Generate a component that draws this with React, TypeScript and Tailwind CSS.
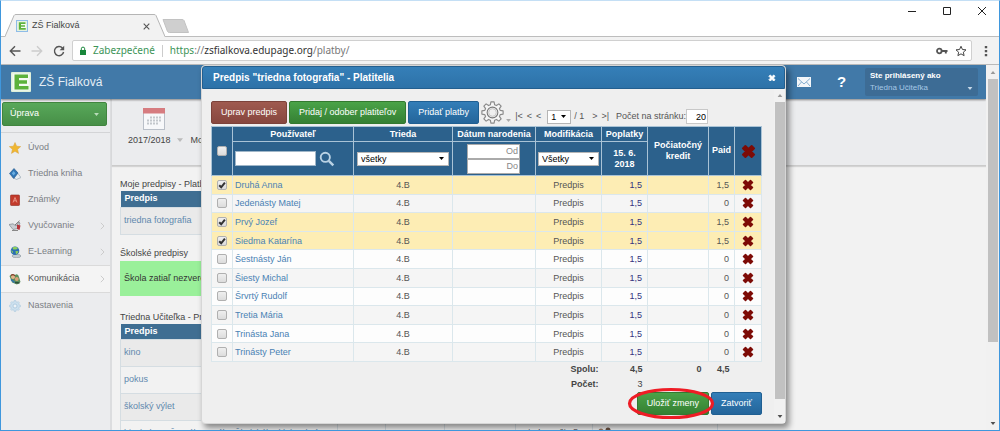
import { useState } from 'react';
import type { ReactNode } from 'react';

type Payer = { name: string; paid: string; selected: boolean };

const payers: Payer[] = [
  { name: 'Druhá Anna', paid: '1,5', selected: true },
  { name: 'Jedenásty Matej', paid: '0', selected: false },
  { name: 'Prvý Jozef', paid: '1,5', selected: true },
  { name: 'Siedma Katarína', paid: '1,5', selected: true },
  { name: 'Šestnásty Ján', paid: '0', selected: false },
  { name: 'Šiesty Michal', paid: '0', selected: false },
  { name: 'Šrvrtý Rudolf', paid: '0', selected: false },
  { name: 'Tretia Mária', paid: '0', selected: false },
  { name: 'Trinásta Jana', paid: '0', selected: false },
  { name: 'Trinásty Peter', paid: '0', selected: false },
];

/* Outline of a cog with eight teeth, centred on (12, 12). */
function cogPath(outer: number, inner: number) {
  const points: string[] = [];
  for (let i = 0; i < 8; i++) {
    const a = (i * Math.PI) / 4;
    const corners: [number, number][] = [
      [inner, -0.27],
      [outer, -0.15],
      [outer, 0.15],
      [inner, 0.27],
    ];
    corners.forEach(([r, d]) => {
      points.push(`${(12 + r * Math.sin(a + d)).toFixed(2)} ${(12 - r * Math.cos(a + d)).toFixed(2)}`);
    });
  }
  return `M${points.join('L')}Z`;
}

function Caret({ className }: { className: string }) {
  return (
    <svg viewBox="0 0 8 5" className={className} aria-hidden="true">
      <path d="M0 0H8L4 5Z" fill="currentColor" />
    </svg>
  );
}

function Cross({ className }: { className: string }) {
  return (
    <svg viewBox="0 0 24 24" className={className} aria-hidden="true">
      <path
        d="M7 3L12 8L17 3L21 7L16 12L21 17L17 21L12 16L7 21L3 17L8 12L3 7Z"
        fill="currentColor"
        stroke="currentColor"
        strokeWidth="3"
        strokeLinejoin="round"
      />
    </svg>
  );
}

function Check({ label, checked, onChange }: { label: string; checked: boolean; onChange: () => void }) {
  return (
    <label className="mx-auto grid size-[10px] place-items-center">
      <input
        type="checkbox"
        aria-label={label}
        checked={checked}
        onChange={onChange}
        className="col-start-1 row-start-1 size-[10px] appearance-none rounded-[2px] border border-[#b0b0b0] bg-linear-to-b from-[#efefef] to-[#dcdcdc]"
      />
      {checked && (
        <svg viewBox="0 0 10 10" className="pointer-events-none col-start-1 row-start-1 size-[10px]" aria-hidden="true">
          <path d="M2.2 5.2L4.2 7.3L7.9 2.6" fill="none" stroke="#333" strokeWidth="2" />
        </svg>
      )}
    </label>
  );
}

function Picker({ label, value, className }: { label: string; value: string; className: string }) {
  return (
    <label className={`grid h-[14px] items-center bg-white text-black ${className}`}>
      <select
        aria-label={label}
        className="col-start-1 row-start-1 h-full w-full appearance-none border border-[#b5b5b5] pl-[3px] text-[9px] leading-3 font-normal"
      >
        <option>{value}</option>
      </select>
      <Caret className="pointer-events-none col-start-1 row-start-1 mr-[5px] h-[5px] w-[5px] justify-self-end" />
    </label>
  );
}

function ActionButton({ tone, children }: { tone: string; children: ReactNode }) {
  return (
    <button type="button" className={`h-[23px] rounded-[2px] border bg-linear-to-b px-[9px] text-[9px] whitespace-nowrap text-white ${tone}`}>
      {children}
    </button>
  );
}

const brown = 'border-[#7c423a] from-[#9f5a4f] to-[#87473f]';
const green = 'border-[#33792f] from-[#4aa348] to-[#358033]';
const blue = 'border-[#1f5f92] from-[#337eb8] to-[#24659a]';

function Logo({ className }: { className: string }) {
  return (
    <svg viewBox="0 0 20 20" className={className} aria-hidden="true">
      <rect width="20" height="20" rx="1" fill="#dff0da" />
      <path d="M1.5 1.5H18.5V18.5H1.5Z" fill="#f4faf2" />
      <path d="M3.5 2.5H17V6H8V8.3H16V11.7H8V14H17.5V17.5H3.5Z" fill="#5cb23c" />
    </svg>
  );
}

function BrowserChrome() {
  return (
    <>
      <div className="flex h-9 shrink-0 items-end border-b border-[#bdbdbd] bg-white pl-1">
        <div className="-mb-px flex h-[23px]">
          <svg viewBox="0 0 11 23" className="h-[23px] w-[11px]" aria-hidden="true">
            <path d="M0 23L9 1.5Q9.500 .5 11 .5V23Z" fill="#f2f2f2" />
            <path d="M0 22.500L9 1.500Q9.500 .5 11 .5" fill="none" stroke="#b5b5b5" />
          </svg>
          <div className="flex w-[138px] items-center gap-1 border-t border-[#b5b5b5] bg-[#f2f2f2]">
            <Logo className="size-3 border border-[#8fbce8]" />
            <span className="flex-1 text-[9px] text-[#444]">ZŠ Fialková</span>
            <button type="button" aria-label="Zavrieť kartu" className="mr-1">
              <svg viewBox="0 0 7 7" className="size-[7px]">
                <path d="M.7 .7L6.300 6.300M6.300 .7L.7 6.300" stroke="#555" strokeWidth="1.100" />
              </svg>
            </button>
          </div>
          <svg viewBox="0 0 11 23" className="h-[23px] w-[11px]" aria-hidden="true">
            <path d="M0 .5Q1.500 .5 2 1.500L11 23H0Z" fill="#f2f2f2" />
            <path d="M0 .5Q1.500 .5 2 1.500L11 22.500" fill="none" stroke="#b5b5b5" />
          </svg>
        </div>
        <svg viewBox="0 0 27 14" className="mb-[3px] -ml-[3px] h-[14px] w-[27px]" aria-hidden="true">
          <path d="M1 .5H20Q21.500 .5 22 1.500L26.500 13.500H7.500Q6 13.500 5.500 12.500Z" fill="#cfcfcf" stroke="#c2c2c2" />
        </svg>
        <div className="mr-[13px] ml-auto flex gap-[27px] self-start pt-[6px]">
          <button type="button" aria-label="Minimalizovať">
            <svg viewBox="0 0 8 8" className="size-2">
              <path d="M0 4.500H8" stroke="#222" />
            </svg>
          </button>
          <button type="button" aria-label="Maximalizovať">
            <svg viewBox="0 0 8 8" className="size-2">
              <path d="M.5 .5H7.500V7.500H.5Z" fill="none" stroke="#222" />
            </svg>
          </button>
          <button type="button" aria-label="Zavrieť">
            <svg viewBox="0 0 8 8" className="size-2">
              <path d="M0 0L8 8M8 0L0 8" stroke="#222" />
            </svg>
          </button>
        </div>
      </div>
      <div className="flex h-7 shrink-0 items-center border-b border-[#b9b9b9] bg-[#f2f2f2] pr-[11px] pl-2">
        <button type="button" aria-label="Späť">
          <svg viewBox="0 0 12 12" className="size-3">
            <path d="M11.500 6H1.500M6 1.300L1.300 6L6 10.700" fill="none" stroke="#555" strokeWidth="1.400" />
          </svg>
        </button>
        <button type="button" aria-label="Dopredu" className="ml-[10px]">
          <svg viewBox="0 0 12 12" className="size-3">
            <path d="M.5 6H10.500M6 1.300L10.700 6L6 10.700" fill="none" stroke="#ccc" strokeWidth="1.400" />
          </svg>
        </button>
        <button type="button" aria-label="Obnoviť" className="ml-[10px]">
          <svg viewBox="0 0 12 12" className="size-3">
            <path d="M9.500 3A4.600 4.600 0 1 0 10.600 7" fill="none" stroke="#555" strokeWidth="1.400" />
            <path d="M11.200 .7V5.300H6.600Z" fill="#555" />
          </svg>
        </button>
        <div className="ml-[7px] flex h-[21px] flex-1 items-center rounded-[2px] border border-[#d0d0d0] bg-white pr-1 pl-[6px] font-['Noto_Sans',sans-serif] text-[10px]">
          <svg viewBox="0 0 8 10" className="h-[10px] w-2" aria-hidden="true">
            <path d="M1 4H7V9H1Z" fill="#18873b" />
            <path d="M2.300 4V2.800A1.700 1.700 0 0 1 5.700 2.800V4" fill="none" stroke="#18873b" />
          </svg>
          <span className="ml-[6px] text-[#3c9457]">Zabezpečené</span>
          <span className="mx-[7px] h-3 border-l border-[#ccc]" />
          <span className="flex-1 text-[#333]">
            <span className="text-[#3c9457]">https</span>
            <span className="text-[#777]">://</span>zsfialkova.edupage.org<span className="text-[#777]">/platby/</span>
          </span>
          <svg viewBox="0 0 12 8" className="h-2 w-3" aria-hidden="true">
            <circle cx="3.300" cy="4" r="2.300" fill="none" stroke="#555" strokeWidth="1.800" />
            <path d="M5.500 4H11.500M9.800 4V6.500" fill="none" stroke="#555" strokeWidth="1.900" />
          </svg>
          <svg viewBox="0 0 24 24" className="ml-[7px] size-3" aria-hidden="true">
            <path
              d="M12 2.500L14.900 9L22 9.700L16.700 14.400L18.200 21.300L12 17.700L5.800 21.300L7.300 14.400L2 9.700L9.100 9Z"
              fill="none"
              stroke="#444"
              strokeWidth="2"
            />
          </svg>
        </div>
        <button type="button" aria-label="Ponuka" className="ml-3">
          <svg viewBox="0 0 4 12" className="h-3 w-1">
            <path d="M.8 1H3.200V3.200H.8ZM.8 5H3.200V7.200H.8ZM.8 9H3.200V11.200H.8Z" fill="#555" />
          </svg>
        </button>
      </div>
    </>
  );
}

function PageHeader() {
  return (
    <header className="relative z-10 flex h-[34px] shrink-0 items-center bg-[#4179a8] pr-2 pl-[10px] text-white shadow-[0_1px_2px_rgba(0,0,0,0.45)]">
      <Logo className="size-5" />
      <span className="ml-2 flex-1 text-[12px] text-[#e6eef5]">ZŠ Fialková</span>
      <button type="button" aria-label="Správy">
        <svg viewBox="0 0 14 10" className="h-[10px] w-[14px]">
          <rect width="14" height="10" fill="#f3f6f9" />
          <path d="M1 1.500L7 7L13 1.500M1 9L4.500 5M13 9L9.500 5" fill="none" stroke="#6b9cc4" strokeWidth=".8" />
        </svg>
      </button>
      <button type="button" className="ml-[26px] w-2 text-[15px] leading-4 font-bold" aria-label="Pomocník">
        ?
      </button>
      <button type="button" className="ml-5 flex h-7 w-[113px] items-end justify-between rounded-[2px] bg-[#3d6c95] px-[5px] pb-[2px] text-left">
        <span className="flex flex-col">
          <span className="text-[8px] leading-3 font-bold">Ste prihlásený ako</span>
          <span className="text-[8px] leading-3 text-[#a6c8e6]">Triedna Učiteľka</span>
        </span>
        <Caret className="mb-1 h-[3px] w-[6px] text-[#c6d8e8]" />
      </button>
    </header>
  );
}

const menuIcons: Record<string, ReactNode> = {
  star: (
    <path d="M6 .5L7.600 4.200L11.700 4.600L8.600 7.300L9.500 11.400L6 9.300L2.500 11.400L3.400 7.300L.3 4.600L4.400 4.200Z" fill="#f0b731" stroke="#d9a13a" strokeWidth=".5" />
  ),
  book: (
    <>
      <path d="M7 3L12 9.500L7.500 11.500L3 9Z" fill="#e6edf2" stroke="#8a9aa6" strokeWidth=".6" />
      <path d="M5 .5L9 5L4.800 10.500L.5 5.500Z" fill="#2f75b5" stroke="#1f568a" strokeWidth=".6" />
      <path d="M4.600 3L6.500 5.200L4.600 7.600L2.800 5.400Z" fill="#6aaee0" />
    </>
  ),
  grades: (
    <>
      <rect x="1.500" y="1" width="9" height="10.500" rx=".8" fill="#c23a2b" stroke="#8f2a20" strokeWidth=".6" />
      <path d="M4 8.500L6 3.500L8 8.500M4.800 6.800H7.200" fill="none" stroke="#eb9a8b" strokeWidth=".9" />
    </>
  ),
  teach: (
    <>
      <path d="M0 4.500L4 3.800L7 6L10 2L11 3L9 8.500L4 9.500L2 7Z" fill="#c9ced3" stroke="#6d757c" strokeWidth=".6" />
      <path d="M8 4.500L11.500 5.500L10.500 10L8 9Z" fill="#b5343a" />
      <path d="M6 5L10.500 .8" stroke="#666" strokeWidth=".9" />
      <path d="M3 10.500H9" stroke="#888" />
    </>
  ),
  globe: (
    <>
      <ellipse cx="7.500" cy="10" rx="4.500" ry="1.700" fill="#c3cbd1" stroke="#7d8890" strokeWidth=".5" />
      <circle cx="6" cy="4.800" r="4.300" fill="#2c6fb3" />
      <path d="M4 1.200Q7 0 8.800 2.200Q7.500 4 5.500 3.500Q3 3.500 4 1.200ZM6.500 5L9.500 5.200Q9 8 7 8.500ZM2 4L4 5.500L3.500 7.500Z" fill="#8ecf5a" />
    </>
  ),
  people: (
    <>
      <path d="M.5 3Q3 0 6 2Q9 0 10 4L11.500 9L8 11.500L3 9.500Z" fill="#5a8f5c" />
      <circle cx="4" cy="4" r="2" fill="#e3b48c" />
      <circle cx="7.800" cy="6" r="1.900" fill="#d9a277" />
      <path d="M2 2.500Q4 .5 6 2.800" stroke="#8a3f2a" fill="none" strokeWidth="1.200" />
      <path d="M2 6.500L5.500 9.500" stroke="#2e6fb0" strokeWidth="1.600" />
      <path d="M6 9.500L10.500 10" stroke="#2b4d3a" strokeWidth="1.600" />
    </>
  ),
  cog: (
    <g transform="scale(.5)">
      <path d={cogPath(11, 8.500)} fill="#c9dfee" stroke="#9dc1da" strokeWidth="1" />
      <circle cx="12" cy="12" r="4" fill="#eef4f8" stroke="#9dc1da" strokeWidth="1.500" />
    </g>
  ),
};

const menu = [
  { icon: 'star', label: 'Úvod' },
  { icon: 'book', label: 'Triedna kniha' },
  { icon: 'grades', label: 'Známky' },
  { icon: 'teach', label: 'Vyučovanie', more: true },
  { icon: 'globe', label: 'E-Learning', more: true },
  { icon: 'people', label: 'Komunikácia', more: true, active: true },
  { icon: 'cog', label: 'Nastavenia' },
];

function Sidebar() {
  return (
    <nav className="w-[111px] shrink-0 border-r-2 border-[#dcdddf] bg-[#ebecee] pt-[3px]">
      <button
        type="button"
        className="mr-[3px] ml-px flex h-[24px] w-[105px] items-center justify-between rounded-[2px] border border-[#41853f] bg-linear-to-b from-[#58a85a] to-[#478f47] px-[7px] text-[9px] text-white"
      >
        Úprava
        <Caret className="h-[3px] w-[5px] text-[#b9dcb9]" />
      </button>
      <ul className="mt-[6px] border-t border-[#d3d4d6] pt-[2px]">
        {menu.map((item) => (
          <li key={item.label} className={item.active ? 'border-y border-[#dadada] bg-[#f4f4f4]' : ''}>
            <a href="#menu" className={`flex h-[26px] items-center gap-[7px] pr-[5px] pl-2 text-[9px] ${item.active ? 'text-[#555]' : 'text-[#7b7f85]'}`}>
              <svg viewBox="0 0 12 12" className={`size-3 ${item.icon === 'cog' ? 'opacity-90' : ''}`} aria-hidden="true">
                {menuIcons[item.icon]}
              </svg>
              <span className="flex-1">{item.label}</span>
              {item.more && (
                <svg viewBox="0 0 5 8" className="h-2 w-[5px]" aria-hidden="true">
                  <path d="M.8 .8L4 4L.8 7.200" fill="none" stroke="#ccc" />
                </svg>
              )}
            </a>
          </li>
        ))}
      </ul>
    </nav>
  );
}

function ChargeTable({ rows }: { rows: string[] }) {
  return (
    <table className="w-[597px] table-fixed border-collapse text-left text-[9px]">
      <colgroup>
        <col className="w-[217px]" />
        <col className="w-[48px]" />
        <col className="w-[59px]" />
        <col className="w-[71px]" />
        <col className="w-[77px]" />
        <col className="w-[125px]" />
      </colgroup>
      <thead>
        <tr className="h-4 bg-[#3f6e92] text-white">
          <th className="px-1 font-bold">Predpis</th>
          <th />
          <th />
          <th />
          <th />
          <th />
        </tr>
      </thead>
      <tbody>
        {rows.map((row, i) => (
          <tr key={row} className={`h-[27px] ${i % 2 ? 'bg-[#f2f2f2]' : 'bg-[#eaeaea]'}`}>
            <td className="border border-[#d5dde2] px-[3px] whitespace-nowrap">
              <a href="#predpis" className="text-[#6189ae]">
                {row}
              </a>
            </td>
            <td className="border border-[#d5dde2] text-center font-bold text-[#444]">{i === 3 && '0,0'}</td>
            <td className="border border-[#d5dde2]" />
            <td className="border border-[#d5dde2]" />
            <td className="border border-[#d5dde2] px-1 text-[#444]">{i === 3 && 'Triedna Učiteľka'}</td>
            <td className="border border-[#d5dde2] px-1">
              {i === 3 && (
                <svg viewBox="0 0 16 14" className="h-[14px] w-4" aria-hidden="true">
                  <circle cx="4" cy="4" r="2.500" fill="#9c7b66" />
                  <circle cx="11" cy="3" r="2.500" fill="#6b5040" />
                  <path d="M1 14V9Q4 5 7.500 8Q11 4 15 8V14Z" fill="#7d8f9c" />
                </svg>
              )}
            </td>
          </tr>
        ))}
      </tbody>
    </table>
  );
}

function PageContent() {
  return (
    <main className="min-w-0 flex-1 bg-[#f2f2f2] text-[9px] text-[#444]">
      <div className="flex h-[67px] items-end border-b border-[#cbcbcb] bg-[#ebecee] pb-[19px] pl-4 shadow-[0_1px_1px_rgba(0,0,0,0.12)]">
        <div className="flex flex-col items-start gap-1">
          <svg viewBox="0 0 22 22" className="ml-[15px] size-[22px]" aria-hidden="true">
            <rect x=".5" y=".5" width="21" height="21" fill="#f7f8fa" stroke="#b9bfc8" />
            <path d="M0 0H22V5.500H0Z" fill="#d67c80" />
            <path d="M7 9.500H19M4 12.500H19M4 15.500H16" stroke="#c3c7cc" strokeWidth="2" strokeDasharray="2 1" />
          </svg>
          <div className="flex items-center leading-3">
            2017/2018
            <Caret className="ml-[6px] h-[6px] w-[6px] text-[#bbb]" />
            <span className="ml-2">Moje predpisy</span>
          </div>
        </div>
      </div>
      <div className="pt-3 pl-2">
        <h2 className="leading-3">Moje predpisy - Platby</h2>
        <div className="pt-px">
          <ChargeTable rows={['triedna fotografia']} />
        </div>
        <h2 className="pt-3 leading-3">Školské predpisy</h2>
        <p className="mt-[2px] h-[35px] w-[597px] bg-[#9af09a] px-1 leading-[35px] text-[#333]">Škola zatiaľ nezverejnila žiadne predpisy</p>
        <h2 className="pt-[15px] leading-3">Triedna Učiteľka - Predpisy</h2>
        <div className="pt-px">
          <ChargeTable rows={['kino', 'pokus', 'školský výlet', 'bicykel pre Šrvrtého a výlet Školského klubu detí']} />
        </div>
      </div>
    </main>
  );
}

function Scrollbar({ className, arrow, thumb, rest }: { className: string; arrow: string; thumb: string; rest: string }) {
  return (
    <div className={`flex shrink-0 flex-col items-center bg-[#f1f1f1] ${className}`} aria-hidden="true">
      <div className={`flex items-center justify-center ${arrow}`}>
        <Caret className="h-[3px] w-[6px] rotate-180 text-[#999]" />
      </div>
      <div className={`w-[10px] bg-[#c1c1c1] ${thumb}`} />
      <div className={rest} />
      <div className={`flex items-center justify-center ${arrow}`}>
        <Caret className="h-[3px] w-[6px] text-[#505050]" />
      </div>
    </div>
  );
}

const head = 'border border-[#a9c3d6] font-bold';
const cell = 'border border-[#dbe7ec]';

function PayersDialog() {
  const [rows, setRows] = useState(payers);
  const toggle = (index: number) => setRows(rows.map((row, i) => (i === index ? { ...row, selected: !row.selected } : row)));
  const all = rows.every((row) => row.selected);

  return (
    <section
      role="dialog"
      aria-label="Predpis triedna fotografia"
      className="w-[585px] rounded-[4px] border border-[#d6d6d6] bg-[#efefef] shadow-[3px_4px_6px_rgba(0,0,0,0.45)]"
    >
      <header className="flex h-[23px] items-center justify-between rounded-t-[3px] border border-[#235f8f] bg-linear-to-b from-[#357fb8] to-[#2d72a8] pr-2 pl-[10px] text-white">
        <h1 className="text-[10px] font-bold">Predpis &quot;triedna fotografia&quot; - Platitelia</h1>
        <button type="button" aria-label="Zavrieť okno">
          <Cross className="size-2" />
        </button>
      </header>
      <div className="flex pl-[9px]">
        <div className="min-w-0 flex-1 pt-3 pr-3 pb-2 text-[9px] text-[#555]">
          <div className="flex h-[25px] items-start gap-[2px]">
            <ActionButton tone={brown}>Uprav predpis</ActionButton>
            <ActionButton tone={green}>Pridaj / odober platiteľov</ActionButton>
            <ActionButton tone={blue}>Pridať platby</ActionButton>
            <button type="button" aria-label="Nastavenia tabuľky" className="flex items-end">
              <svg viewBox="0 0 24 24" className="size-[23px]">
                <path d={cogPath(11.200, 8.300)} fill="#f5f5f5" stroke="#8a8a8a" strokeWidth="1.200" strokeLinejoin="round" />
                <circle cx="12" cy="12" r="5.600" fill="#efefef" stroke="#777" strokeWidth="1.100" />
                <circle cx="12" cy="12" r="4" fill="none" stroke="#c4c4c4" strokeWidth="1" />
              </svg>
              <Caret className="mb-[2px] ml-[2px] h-[3px] w-[5px] text-[#aaa]" />
            </button>
            <div className="mt-2 ml-[2px] flex h-[15px] flex-1 items-center whitespace-nowrap">
              <span className="flex gap-1">
                <span>|&lt;</span>
                <span>&lt;</span>
                <span>&lt;</span>
              </span>
              <Picker label="Strana" value="1" className="ml-[6px] w-6" />
              <span className="ml-[3px]">/ 1</span>
              <span className="ml-2 flex gap-1">
                <span>&gt;</span>
                <span>&gt;|</span>
              </span>
              <label className="ml-auto flex items-center">
                Počet na stránku:
                <input defaultValue="20" className="mr-[54px] h-[15px] w-[22px] border border-[#c8c8c8] bg-white pr-px text-right text-[9px] text-black" />
              </label>
            </div>
          </div>
          <table className="w-full table-fixed border-collapse text-center">
            <colgroup>
              <col className="w-[21px]" />
              <col className="w-[121px]" />
              <col className="w-[99px]" />
              <col className="w-[83px]" />
              <col className="w-[66px]" />
              <col className="w-[46px]" />
              <col className="w-[61px]" />
              <col className="w-[26px]" />
              <col />
            </colgroup>
            <thead className="bg-[#2c618c] text-white">
              <tr className="h-[15px]">
                <th rowSpan={2} className={head}>
                  <Check label="Označiť všetkých" checked={all} onChange={() => setRows(rows.map((row) => ({ ...row, selected: !all })))} />
                </th>
                <th className={`leading-[13px] ${head}`}>Používateľ</th>
                <th className={`leading-[13px] ${head}`}>Trieda</th>
                <th className={`leading-[13px] whitespace-nowrap ${head}`}>Dátum narodenia</th>
                <th className={`leading-[13px] ${head}`}>Modifikácia</th>
                <th className={`leading-[13px] ${head}`}>Poplatky</th>
                <th rowSpan={2} className={`leading-[11px] ${head}`}>
                  Počiatočný kredit
                </th>
                <th rowSpan={2} className={head}>
                  Paid
                </th>
                <th rowSpan={2} className={head}>
                  <button type="button" aria-label="Odstrániť všetkých" className="align-middle text-[#7d0b06]">
                    <Cross className="size-[15px]" />
                  </button>
                </th>
              </tr>
              <tr className="h-[34px]">
                <th className={head}>
                  <div className="flex items-center gap-[3px] px-[2px]">
                    <input aria-label="Používateľ" className="h-[15px] w-[81px] border border-[#9fb6c8] bg-white px-[2px] font-normal text-black" />
                    <svg viewBox="0 0 16 16" className="size-4" aria-hidden="true">
                      <circle cx="6.300" cy="6.300" r="4.600" fill="none" stroke="#b9d2e4" strokeWidth="1.900" />
                      <path d="M9.800 9.800L14.300 14.300" stroke="#b9d2e4" strokeWidth="2.500" />
                    </svg>
                  </div>
                </th>
                <th className={`px-[3px] ${head}`}>
                  <Picker label="Trieda" value="všetky" className="w-full" />
                </th>
                <th className={head}>
                  <div className="ml-[14px] flex w-[53px] flex-col">
                    <input aria-label="Narodenie od" placeholder="Od" className="h-[15px] border border-[#aaa] bg-white px-px text-right font-normal text-black placeholder:text-[#888]" />
                    <input aria-label="Narodenie do" placeholder="Do" className="h-[15px] border border-[#aaa] bg-white px-px text-right font-normal text-black placeholder:text-[#888]" />
                  </div>
                </th>
                <th className={`px-[2px] ${head}`}>
                  <Picker label="Modifikácia" value="Všetky" className="w-full" />
                </th>
                <th className={`px-[9px] leading-[11px] ${head}`}>15. 6. 2018</th>
              </tr>
            </thead>
            <tbody className="h-[186px]">
              {rows.map((row, i) => (
                <tr key={row.name} className={`leading-4 ${row.selected ? 'bg-[#fdedb4]' : i % 2 ? 'bg-[#f5f5f5]' : 'bg-[#fdfdfd]'}`}>
                  <td className={cell}>
                    <Check label={row.name} checked={row.selected} onChange={() => toggle(i)} />
                  </td>
                  <td className={`pl-[2px] text-left ${cell}`}>
                    <a href="#platitel" className="text-[#4a82b4]">
                      {row.name}
                    </a>
                  </td>
                  <td className={cell}>4.B</td>
                  <td className={cell} />
                  <td className={cell}>Predpis</td>
                  <td className={`pr-[5px] text-right text-[#33337f] ${cell}`}>1,5</td>
                  <td className={cell} />
                  <td className={`pr-[5px] text-right ${cell}`}>{row.paid}</td>
                  <td className={cell}>
                    <button type="button" aria-label={`Odstrániť ${row.name}`} className="block w-full text-[#7d0b06]">
                      <Cross className="mx-auto size-3" />
                    </button>
                  </td>
                </tr>
              ))}
            </tbody>
            <tfoot className="text-right leading-[15px] text-[#444]">
              <tr className="h-[15px] font-bold">
                <td colSpan={5} className="pr-[3px]">
                  Spolu:
                </td>
                <td className="pr-[5px]">4,5</td>
                <td className="pr-[7px]">0</td>
                <td className="pr-[5px]">4,5</td>
                <td />
              </tr>
              <tr className="h-[15px]">
                <td colSpan={5} className="pr-[3px] font-bold">
                  Počet:
                </td>
                <td className="pr-[5px]">3</td>
                <td />
                <td />
                <td />
              </tr>
            </tfoot>
          </table>
          <div className="flex justify-end gap-[2px]">
            <div className="relative">
              <ActionButton tone={green}>Uložiť zmeny</ActionButton>
              <svg viewBox="0 0 88 33" className="pointer-events-none absolute -top-[5px] -left-[10px] h-[33px] w-[88px]" aria-hidden="true">
                <ellipse cx="44" cy="16.500" rx="41.500" ry="14" fill="none" stroke="#ee1c25" strokeWidth="3.200" />
              </svg>
            </div>
            <ActionButton tone={blue}>Zatvoriť</ActionButton>
          </div>
        </div>
        <Scrollbar className="w-[11px]" arrow="h-[13px]" thumb="flex-1" rest="h-[11px]" />
      </div>
    </section>
  );
}

export default function App() {
  return (
    <div className="flex h-screen flex-col overflow-hidden border border-t-[#c4dff5] border-r-[#3f97dd] border-b-[#3f97dd] border-l-[#3f97dd] bg-white font-['Liberation_Sans',Arial,sans-serif]">
      <BrowserChrome />
      <div className="flex min-h-0 flex-1">
        <div className="relative flex min-w-0 flex-1 flex-col overflow-hidden">
          <PageHeader />
          <div className="flex min-h-0 flex-1">
            <Sidebar />
            <PageContent />
          </div>
          <div className="absolute inset-0 z-20 flex items-start justify-center">
            <PayersDialog />
          </div>
        </div>
        <Scrollbar className="w-[13px]" arrow="h-[14px]" thumb="grow-[264]" rest="grow-[74]" />
      </div>
    </div>
  );
}
